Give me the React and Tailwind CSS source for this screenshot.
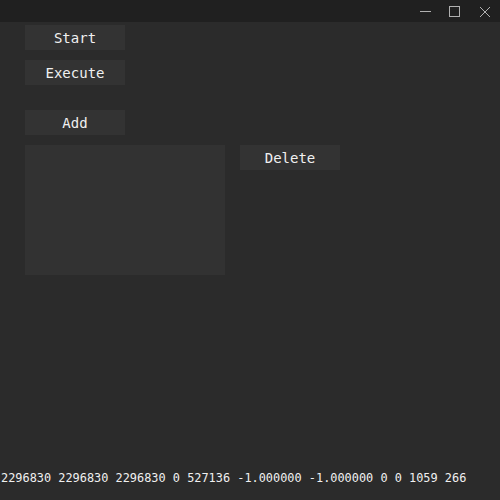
import React from "react";

const Btn = ({ children, className = "" }) => (
  <div
    className={`w-[100px] h-[25px] bg-[#333333] flex items-center justify-center pt-[2px] text-[#f0f0f0] text-[14px] ${className}`}
  >
    {children}
  </div>
);

const App = () => {
  return (
    <div
      className="w-[500px] h-[500px] bg-[#2b2b2b] flex flex-col overflow-hidden"
      style={{ fontFamily: '"DejaVu Sans Mono", "Liberation Mono", monospace' }}
    >
      {/* title bar */}
      <div className="h-[22px] bg-[#202020] flex items-center justify-end shrink-0">
        <svg width="500" height="22" viewBox="0 0 500 22" className="block">
          <line x1="420" y1="11.5" x2="431" y2="11.5" stroke="#b0b0b0" strokeWidth="1" />
          <rect x="449.5" y="6.5" width="10" height="10" fill="none" stroke="#b0b0b0" strokeWidth="1" />
          <path d="M480 7 L490 17 M490 7 L480 17" stroke="#b0b0b0" strokeWidth="1" />
        </svg>
      </div>

      <div className="flex-1 flex flex-col pl-[25px] pt-[3px]">
        <Btn>Start</Btn>
        <Btn className="mt-[10px]">Execute</Btn>
        <Btn className="mt-[25px]">Add</Btn>
        <div className="flex mt-[10px] gap-[15px]">
          <div className="w-[200px] h-[130px] bg-[#323232]" />
          <Btn>Delete</Btn>
        </div>
      </div>

      <div className="h-[27px] pl-[1px] text-[11.9px] text-[#f0f0f0] leading-none whitespace-nowrap">
        2296830 2296830 2296830 0 527136 -1.000000 -1.000000 0 0 1059 266
      </div>
    </div>
  );
};

export default App;
